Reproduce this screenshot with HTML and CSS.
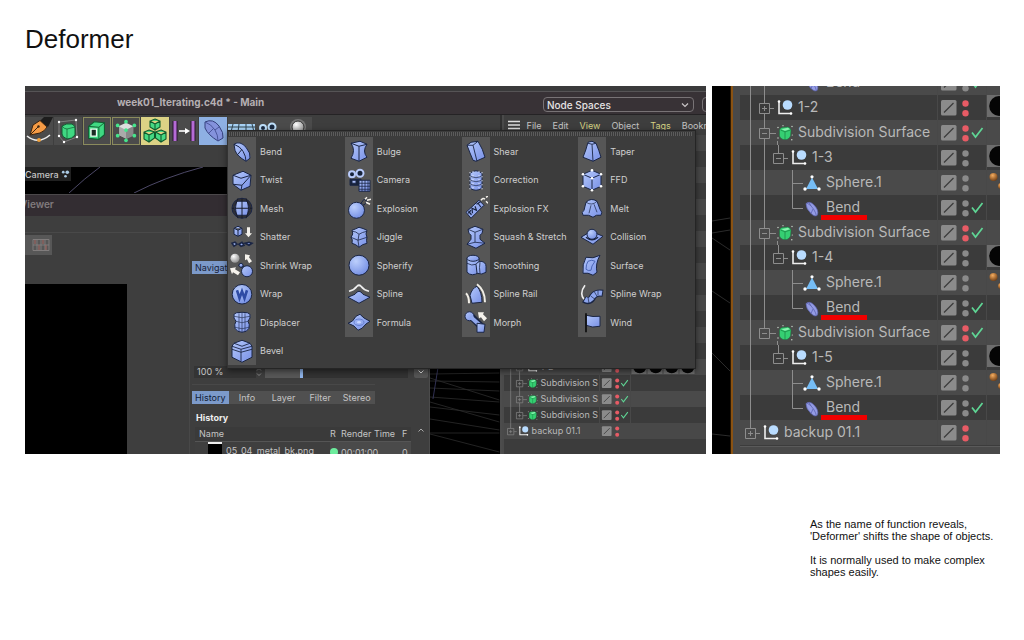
FILE: index.html
```html
<!DOCTYPE html>
<html lang="en">
<head>
<meta charset="utf-8">
<title>Deformer</title>
<link rel="stylesheet" href="styles.css">
</head>
<body>
<svg class="defs" aria-hidden="true">
  <defs>
    <linearGradient id="blue" x1="0" y1="0" x2="1" y2="1"><stop offset="0" stop-color="#b4c8fb"/><stop offset="1" stop-color="#7890e6"/></linearGradient>
    <radialGradient id="ball" cx=".35" cy=".3" r=".8"><stop offset="0" stop-color="#bccffc"/><stop offset="1" stop-color="#6f8ae2"/></radialGradient>
    <radialGradient id="grey" cx=".35" cy=".3" r=".8"><stop offset="0" stop-color="#fff"/><stop offset="1" stop-color="#858585"/></radialGradient>
    <radialGradient id="rust" cx=".4" cy=".3" r=".8"><stop offset="0" stop-color="#f5ad60"/><stop offset="1" stop-color="#63330d"/></radialGradient>
  </defs>
  <g fill="none" stroke="#8d8d8d">
    <path id="l0" d="M10.500 0V25"/>
    <path id="l1" d="M24.500 0V25"/>
  </g>
  <symbol id="nul" viewBox="0 0 16 16"><path d="M2 1.500V14H14.500" fill="none" stroke="#eee" stroke-width="1.600"/><circle cx="2" cy="2" r="1.300" fill="#fff"/><circle cx="14" cy="14" r="1.300" fill="#fff"/><circle cx="10.500" cy="5.500" r="4.800" fill="#b9dcff"/></symbol>
  <symbol id="sds" viewBox="0 0 16 16"><path d="M2.500 5Q3 3 5 2.500L11 2Q13.500 3 14 5L13.500 11Q12 14 10 14.500L6 14.500Q3 13 2.500 11Z" fill="#35cf72" stroke="#1c6b3c" stroke-width=".5"/><path d="M3.500 5L8 6.800L13.500 5M8 6.800L8 14" fill="none" stroke="#17803f" stroke-width=".7"/><path d="M4.500 4.300L11 2.800L12.800 4.300L8 5.800Z" fill="#8cf3b2"/><g fill="#cfdcd1"><circle cx="1" cy="2.500" r=".7"/><circle cx="6" cy=".7" r=".6"/><circle cx="15" cy="1.500" r=".7"/><circle cx="15.300" cy="10" r=".6"/><circle cx="1" cy="13" r=".7"/><circle cx="14.800" cy="14.800" r=".7"/></g></symbol>
  <symbol id="sph" viewBox="0 0 18 16"><path d="M9 2.500L15 14H3Z" fill="#76bdf5"/><g fill="#fff"><circle cx="9" cy="1.800" r="1.600"/><circle cx="2" cy="14" r="1.700"/><circle cx="16" cy="14" r="1.700"/></g></symbol>
  <symbol id="bnd" viewBox="0 0 16 16"><path d="M2 2.500Q6-.5 10 4Q15 9 13.500 14Q11 16.500 7 12.500Q1.500 7 2 2.500Z" fill="#949ce4" stroke="#5a60a8" stroke-width=".7"/><path d="M3 2Q7 4 9.500 8Q12 12 12.500 15M7 12.500L9 8M5 1.500L7 5" fill="none" stroke="#5c63b0" stroke-width=".8"/></symbol>

  <symbol id="r-null1" viewBox="0 0 55 25"><path d="M24.500 0V8M24.500 19V25M30 13.500H34" stroke="#8d8d8d"/><path d="M19.500 8.500H29.500V18.500H19.500ZM22 13.500H27M24.500 11V16" fill="none" stroke="#8d8d8d"/><use href="#nul" x="37" y="4.500" width="16" height="16"/></symbol>
  <symbol id="r-sds" viewBox="0 0 55 25"><path d="M24.500 0V8M30 13.500H36M37.500 21V25" stroke="#8d8d8d"/><path d="M19.500 8.500H29.500V18.500H19.500ZM22 13.500H27" fill="none" stroke="#8d8d8d"/><use href="#sds" x="37" y="5" width="16" height="16"/></symbol>
  <symbol id="r-sdsp" viewBox="0 0 55 25"><path d="M24.500 0V8M30 13.500H36" stroke="#8d8d8d"/><path d="M19.500 8.500H29.500V18.500H19.500ZM22 13.500H27M24.500 11V16" fill="none" stroke="#8d8d8d"/><use href="#sds" x="37" y="5" width="16" height="16"/></symbol>
  <symbol id="r-down" viewBox="0 0 55 25"><path d="M24.500 19V25" stroke="#8d8d8d"/></symbol>
  <symbol id="r-null2" viewBox="0 0 69 25"><path d="M38.500 0V8M44 13.500H48" stroke="#8d8d8d"/><path d="M33.500 8.500H43.500V18.500H33.500ZM36 13.500H41" fill="none" stroke="#8d8d8d"/><use href="#nul" x="51" y="4.500" width="16" height="16"/></symbol>
  <symbol id="r-sph" viewBox="0 0 83 25"><path d="M52.500 0V25M52.500 13.500H63" stroke="#8d8d8d"/><use href="#sph" x="63" y="5" width="18" height="16"/></symbol>
  <symbol id="r-bnd" viewBox="0 0 83 25"><path d="M52.500 0V13.500H63" fill="none" stroke="#8d8d8d"/><use href="#bnd" x="64" y="6" width="16" height="16"/></symbol>
  <symbol id="r-back" viewBox="0 0 41 25"><path d="M10.500 0V8M16 13.500H20" stroke="#8d8d8d"/><path d="M5.500 8.500H15.500V18.500H5.500ZM8 13.500H13M10.500 11V16" fill="none" stroke="#8d8d8d"/><use href="#nul" x="23" y="4.500" width="16" height="16"/></symbol>
  <symbol id="st" viewBox="0 0 48 25"><rect x="3" y="5" width="15.500" height="15.500" rx="1.500" fill="#8b8b8b"/><path d="M6 17.500L15.500 8" stroke="#3c3c3c" stroke-width="1.300"/><circle cx="27.500" cy="8.500" r="3.200" fill="currentColor"/><circle cx="27.500" cy="18.300" r="3.200" fill="currentColor"/></symbol>
  <symbol id="ok" viewBox="0 0 48 25"><path d="M34 12.500L37.500 17L44.500 8" fill="none" stroke="#5fd695" stroke-width="1.700"/></symbol>
  <symbol id="tile" viewBox="0 0 20 20"><rect width="20" height="20" fill="#6d6d6d"/><circle cx="11" cy="10" r="9" fill="#050505"/></symbol>
  <symbol id="beads" viewBox="0 0 16 25"><circle cx="6.500" cy="7" r="4" fill="url(#rust)"/><circle cx="14" cy="16" r="3" fill="url(#rust)"/></symbol>
</svg>

<header><h1>Deformer</h1></header>

<main>
  <section class="shots">
    <div class="shot app">
      <div class="strip"></div>
      <div class="titlebar">
        <span class="doc">week01_Iterating.c4d * - Main</span>
        <div class="spaces">
          <select aria-label="Node Spaces"><option>Node Spaces</option></select>
          <svg viewBox="0 0 8 6"><path d="M1 1.500L4 4.500L7 1.500" fill="none" stroke="#c8c4c6" stroke-width="1.200"/></svg>
        </div>
        <span class="nextbox"></span>
      </div>

      <div class="body">
        <div class="work">
          <div class="tools">
            <button aria-label="Spline pen"><svg viewBox="0 0 28 28"><path d="M15 4L19 0H28L23 10Z" fill="#1d1d1d"/><path d="M5 18L8 8L15 3.500L22 10Q20 14 15 16Z" fill="#f59b45" stroke="#3a2410"/><path d="M5 18L13 10" stroke="#3a2410"/><circle cx="13.500" cy="9.500" r="1.200" fill="#3a2410"/><path d="M2 19Q13 28 25 18" fill="none" stroke="#eee" stroke-width="1.600"/><circle cx="14" cy="23" r="2" fill="#f0a13d"/></svg></button>
            <button aria-label="Cube"><svg viewBox="0 0 28 28"><path d="M5 5L22 3L23 20L10 25L5 19Z" fill="none" stroke="#8b8b8b" stroke-width=".8"/><path d="M8 9Q12 6 18 7Q22 9 21 12V18Q18 22 13 22Q8 20 8 17Z" fill="#3fd982" stroke="#135c32"/><path d="M8 9Q10 12 13 12L21 10M13 12V22" stroke="#135c32" stroke-width=".7" fill="none"/><g fill="#fff"><circle cx="5" cy="5" r="1.200"/><circle cx="22" cy="3" r="1.200"/><circle cx="5" cy="19" r="1.200"/><circle cx="23" cy="20" r="1.200"/><circle cx="10" cy="25" r="1.200"/></g></svg></button>
            <button class="lined" aria-label="Extrude"><svg viewBox="0 0 28 28"><path d="M5 9L11 4L22 5V18L16 23L5 22Z" fill="#3fd982" stroke="#135c32" stroke-width="1.200"/><path d="M5 9L16 10L22 5M16 10V23" stroke="#135c32" fill="none"/><path d="M7.500 12H13.500V19.500H7.500Z" fill="#1a2c22" stroke="#e8fff0" stroke-width="1.500"/></svg></button>
            <button class="lined" aria-label="Array"><svg viewBox="0 0 28 28"><path d="M14 5L22 9V19L14 23L6 19V9Z" fill="#aaa" stroke="#444"/><path d="M14 5L22 9L14 13L6 9Z" fill="#ddd"/><path d="M14 13V23L22 19V9Z" fill="#888"/><g fill="#45e58b"><circle cx="14" cy="4" r="2"/><circle cx="5" cy="8" r="2"/><circle cx="23" cy="8" r="2"/><circle cx="14" cy="13" r="2"/><circle cx="5" cy="19" r="2"/><circle cx="23" cy="19" r="2"/><circle cx="14" cy="24" r="2"/></g></svg></button>
            <button class="yellow" aria-label="Cloner"><svg viewBox="0 0 28 28"><g fill="#45d983" stroke="#0f5a2d" stroke-width="1.100"><path d="M14 2L19 4V10L14 13L9 10V4ZM9 4L14 7L19 4M14 7V13"/><path d="M8 13L13.500 15V21L8 25L3 22V15ZM3 15L8 18L13.500 15M8 18V25"/><path d="M20 13L25 15V22L20 25L14.500 21V15ZM14.500 15L20 18L25 15M20 18V25"/></g></svg></button>
            <button aria-label="Measure"><svg viewBox="0 0 28 28"><path d="M5 4V24M23 4V24" stroke="#2b1533" stroke-width="5"/><path d="M5 4V24M23 4V24" stroke="#b56bd6" stroke-width="3"/><path d="M9 14H17" stroke="#fff" stroke-width="1.600"/><path d="M15 11L20 14L15 17Z" fill="#fff"/></svg></button>
            <button class="active" aria-label="Deformers"><svg viewBox="0 0 28 28"><path d="M6 5Q14 1 20 9Q25 16 24 21L19 24Q9 18 6 11Z" fill="#8492dc" stroke="#34407c"/><path d="M6 5Q12 7 16 13Q19 18 19 24M10 16L15 11M20 10L16 13" fill="none" stroke="#4a569b"/></svg></button>
            <button class="cut" aria-label="Floor"><svg viewBox="0 0 28 28"><path d="M0 7H27V15H0Z" fill="#a8d2f5"/><path d="M0 10H27M5 7L3 15M11 7L10 15M18 7L18 15M24 7L26 15" stroke="#304450"/></svg></button>
            <button class="cut" aria-label="Camera"><svg viewBox="0 0 28 28"><circle cx="7" cy="11" r="3" fill="#1b2a40" stroke="#bfe0fb" stroke-width="2"/><circle cx="16" cy="10" r="3.500" fill="#1b2a40" stroke="#bfe0fb" stroke-width="2"/></svg></button>
            <button class="cut" aria-label="Light"><svg viewBox="0 0 28 28"><circle cx="14" cy="10" r="8" fill="#777"/><circle cx="14" cy="10" r="6" fill="url(#grey)" stroke="#333"/></svg></button>
          </div>

          <div class="camera">
            <span>Camera <svg viewBox="0 0 10 8"><g fill="#a9c8e2"><circle cx="2.500" cy="2" r="1.500"/><circle cx="7" cy="2" r="2"/><circle cx="5" cy="6.500" r="1.500"/></g></svg></span>
            <svg class="arcs" viewBox="0 0 201 26"><path d="M44 26Q60 11 75 0M109 26Q140 10 178 0" fill="none" stroke="#5f5a80" stroke-width=".8"/></svg>
          </div>

          <div class="lower">
            <div class="viewer">
              <div class="viewer-title"><span>Viewer</span></div>
              <div class="viewer-menu"></div>
              <div class="viewer-body">
                <div class="preview">
                  <button aria-label="Compare"><svg viewBox="0 0 18 12"><path d="M1 .5H17V11.500H1ZM5 1V11M9 1V11M13 1V11M1 6H17" fill="none" stroke="#858080" stroke-width=".9"/><path d="M3 1V5M7 6V11M11 1V5M14 6V11" stroke="#9c6560" stroke-width="1.200"/></svg></button>
                  <div class="canvas"></div>
                </div>
                <div class="panel">
                  <button class="nav">Navigator</button>
                  <div class="thumb"></div>
                  <div class="zoomrow">
                    <output>100 %</output>
                    <svg class="spin" viewBox="0 0 6 10"><path d="M1 3.500L3 1.500L5 3.500M1 6.500L3 8.500L5 6.500" fill="none" stroke="#999" stroke-width=".8"/></svg>
                    <input type="range" min="0" max="100" value="25" aria-label="Zoom">
                    <button aria-label="Zoom presets"><svg viewBox="0 0 8 6"><path d="M1.500 1.500L4 4L6.500 1.500" fill="none" stroke="#ddd"/></svg></button>
                  </div>
                  <div class="tabs">
                    <button class="on">History</button><button>Info</button><button>Layer</button><button>Filter</button><button>Stereo</button>
                  </div>
                  <h2>History</h2>
                  <div class="hist">
                    <table>
                      <thead><tr><th class="n">Name</th><th class="r">R</th><th class="t">Render Time</th><th class="f">F</th></tr></thead>
                      <tbody><tr><td><span class="pic"></span>05_04_metal_bk.png</td><td><i class="dot"></i></td><td>00:01:00</td><td>0</td></tr></tbody>
                    </table>
                    <svg viewBox="0 0 8 6"><path d="M1.500 4.500L4 2L6.500 4.500" fill="none" stroke="#aaa"/></svg>
                  </div>
                </div>
              </div>
            </div>
            <div class="viewport"><svg viewBox="0 0 70 260" preserveAspectRatio="none"><g fill="none" stroke="#2c2c2c" stroke-width=".8"><path d="M0 180L70 179M0 187L70 188M0 194L70 197M0 203L70 208M0 213L70 221M0 225L70 236M0 239L70 239M0 184L70 206M0 208L70 228M0 240L70 258"/><path d="M3 205L8 174" stroke="#3c3c68"/></g></svg></div>
          </div>
        </div>

        <div class="objects">
          <nav>
            <svg viewBox="0 0 12 10"><path d="M0 1.500H12M0 5H12M0 8.500H12" stroke="#ddd" stroke-width="1.600"/></svg>
            <button>File</button><button>Edit</button><button class="hot">View</button><button>Object</button><button class="hot">Tags</button><button>Bookmarks</button>
          </nav>
          <ul class="tree small">
            <li><svg class="g g1" viewBox="0 0 55 25"><use href="#l0" class="ln"/><use href="#r-null1"/></svg><span class="name">1-2</span><svg class="state red"><use href="#st"/></svg><span class="mats"><svg><use href="#tile"/></svg><svg><use href="#tile"/></svg><svg><use href="#tile"/></svg><svg><use href="#tile"/></svg></span></li>
            <li><svg class="g g1" viewBox="0 0 55 25"><use href="#l0" class="ln"/><use href="#r-down"/><use href="#r-sdsp"/></svg><span class="name">Subdivision S</span><svg class="state red"><use href="#st"/><use href="#ok"/></svg><span class="mats"></span></li>
            <li><svg class="g g1" viewBox="0 0 55 25"><use href="#l0" class="ln"/><use href="#r-down"/><use href="#r-sdsp"/></svg><span class="name">Subdivision S</span><svg class="state red"><use href="#st"/><use href="#ok"/></svg><span class="mats"></span></li>
            <li><svg class="g g1" viewBox="0 0 55 25"><use href="#l0" class="ln"/><use href="#r-sdsp"/></svg><span class="name">Subdivision S</span><svg class="state red"><use href="#st"/><use href="#ok"/></svg><span class="mats"></span></li>
            <li><svg class="g g0"><use href="#r-back"/></svg><span class="name">backup 01.1</span><svg class="state red"><use href="#st"/></svg><span class="mats"></span></li>
          </ul>
        </div>
      </div>

      <div class="menu" role="menu">
        <ul>
          <li><button><svg viewBox="0 0 24 24"><path d="M4 5Q10 1 16 8Q21 14 20 19L16 22Q7 17 5 11Z"/><path d="M4 5Q10 7 13 12Q16 17 16 22M8 15L12 10" fill="none"/></svg>Bend</button></li>
          <li><button><svg viewBox="0 0 24 24"><path d="M3 7L13 3L21 7L20 18L11 22L3 16Z"/><path d="M3 7L11 10L21 7L12 17L3 16M12 17L11 22" fill="none"/></svg>Twist</button></li>
          <li><button><svg viewBox="0 0 24 24"><circle cx="12" cy="12" r="10" fill="#303034"/><path d="M7 5H17L20 12L17 19H7L4 12Z"/><path d="M8 2Q3 12 8 22M16 2Q21 12 16 22M12 2V22M2 12H22" fill="none" stroke="#191c2b"/></svg>Mesh</button></li>
          <li><button><svg viewBox="0 0 24 24"><path d="M4 3L8 1L12 3V9L8 11L4 9ZM4 3L8 5L12 3M8 5V11"/><path d="M17 2H20V8H22L18.500 12L15 8H17Z" fill="#f5f2ec" stroke="none"/><path d="M2 18L5 17L7 19L4 21ZM9 19L12 17L14 20L11 21ZM15 18L19 17L22 18L19 20Z" stroke-width="1.600"/></svg>Shatter</button></li>
          <li><button><svg viewBox="0 0 24 24"><circle cx="5" cy="5" r="4.500" fill="url(#grey)" stroke="none"/><path d="M9 11L16 16" stroke-width="3"/><circle cx="11" cy="12" r="2"/><circle cx="17" cy="18" r="5.500"/><path d="M15 1L20 2L19 4L22 8L19 10L17 6L15 7ZM0 15L6 14L5 16L10 19L8 22L3 19L2 21Z" fill="#f5f2ec" stroke="none"/></svg>Shrink Wrap</button></li>
          <li><button><svg viewBox="0 0 24 24"><circle cx="12" cy="12" r="9.800" fill="url(#ball)"/><path d="M7 8L9.500 16L12 9L14.500 16L17 8" fill="none" stroke="#2e4ba5" stroke-width="2.600"/></svg>Wrap</button></li>
          <li><button><svg viewBox="0 0 24 24"><path d="M4 4Q5 2 12 2Q19 2 20 4Q21 8 18 11Q20 14 19 18Q17 22 12 22Q7 22 5 18Q4 14 6 11Q3 8 4 4Z"/><path d="M4 6Q12 9 20 6M6 11Q12 14 18 11M5 17Q12 20 19 17M9 3V21M12 2V22M15 3V21" fill="none" stroke-width=".6"/></svg>Displacer</button></li>
          <li><button><svg viewBox="0 0 24 24"><path d="M2 7L4 4L12 1L20 4L22 7V18L12 23L2 18Z"/><path d="M2 7L11 10L22 7M11 10V22M4 4L12 7L20 4M2 10L11 13L22 10" fill="none" stroke-width=".9"/></svg>Bevel</button></li>
        </ul>
        <ul>
          <li><button><svg viewBox="0 0 24 24"><path d="M4 4L13 2L20 5Q15 12 20 18L12 22L4 19Q9 11 4 4Z"/><path d="M4 4L12 7L20 5M12 7V22" fill="none"/></svg>Bulge</button></li>
          <li><button><svg viewBox="0 0 24 24"><circle cx="5" cy="6" r="3" fill="#17233a" stroke="#b9cbfb" stroke-width="2"/><circle cx="13" cy="5" r="3.500" fill="#17233a" stroke="#b9cbfb" stroke-width="2"/><path d="M3 11H14V17H3Z" fill="#17233a"/><path d="M5 12H9V15H5ZM12 12H23V23H12Z"/><path d="M15 12V23M18 12V23M21 12V23M12 15H23M12 18H23M12 21H23" stroke-width=".8"/></svg>Camera</button></li>
          <li><button><svg viewBox="0 0 24 24"><path d="M14 7L17 3L20 5L17 9Z" fill="#555"/><circle cx="9.500" cy="14" r="8" fill="url(#ball)"/><path d="M18 3L20 1M20 4L24 3M19 6L23 8" stroke="#f5f2ec" stroke-width="1.500"/></svg>Explosion</button></li>
          <li><button><svg viewBox="0 0 24 24"><path d="M5 5Q8 4 12 2Q16 3 20 5Q18 9 20 12Q19 15 20 18Q15 19 12 22Q9 19 5 18Q6 14 4 12Q7 9 5 5Z"/><path d="M5 6Q9 6 12 9Q15 7 20 6M12 9Q10 15 12 22M4 12L11 15L20 12" fill="none" stroke-width=".8"/></svg>Jiggle</button></li>
          <li><button><svg viewBox="0 0 24 24"><circle cx="12" cy="12" r="10" fill="url(#ball)"/></svg>Spherify</button></li>
          <li><button><svg viewBox="0 0 24 24"><path d="M2 9Q7 8 10 4Q12 2 14 4Q17 8 22 9" fill="none" stroke="#eee" stroke-width="1.700"/><path d="M1 15L8 12Q12 6 16 12L23 15L12 21Z"/></svg>Spline</button></li>
          <li><button><svg viewBox="0 0 24 24"><path d="M1 13Q6 12 9 6L13 4Q16 8 23 11Q19 13 15 18L11 20Q8 15 1 13Z"/><ellipse cx="12" cy="12" rx="5" ry="3.200" fill="none" stroke="#657fd0"/><ellipse cx="12" cy="12" rx="2" ry="1.200" fill="#c6d5ff" stroke="none"/></svg>Formula</button></li>
        </ul>
        <ul>
          <li><button><svg viewBox="0 0 24 24"><path d="M3 6L7 3L14 2Q19 10 21 18L12 22L9 21Q6 14 3 6Z"/><path d="M3 6L9 6L13 22M9 6L14 2" fill="none" stroke-width=".9"/></svg>Shear</button></li>
          <li><button><svg viewBox="0 0 24 24"><path d="M6 5Q12 0 18 5V20Q12 24 6 20Z"/><path d="M6 8Q12 11 18 8M6 12Q12 15 18 12M6 16Q12 19 18 16" fill="none" stroke-width=".7"/><path d="M6 4V21M9 3V22M15 3V22M18 4V21" fill="none" stroke="#e8edff" stroke-width="1.200" stroke-dasharray="1 3"/></svg>Correction</button></li>
          <li><button><svg viewBox="0 0 24 24"><path d="M2 16L15 4L20 9L7 22Z"/><path d="M4.500 15L7.500 18.500M4 17L7 14M8.500 17L8 12L12.500 14L11 10M12.500 8L16.500 5.500M14 7L17 11" fill="none" stroke-width="1.200"/><path d="M17 4Q19 1 21 3M22 1L24 0M22 5L24 7" fill="none" stroke="#f5f2ec" stroke-width="1.500"/></svg>Explosion FX</button></li>
          <li><button><svg viewBox="0 0 24 24"><path d="M4 4L11 1L19 4L18 8L16 10V14L21 18L12 23L3 19L7 14V10L5 8Z"/><path d="M4 4L11 7L19 4M11 7V17L3 19M11 17L21 18" fill="none" stroke-width=".8"/></svg>Squash &amp; Stretch</button></li>
          <li><button><svg viewBox="0 0 24 24"><path d="M3 5V19Q8 24 15 19V5"/><ellipse cx="9" cy="5" rx="6" ry="3"/><path d="M12 11Q14 8 17 8Q22 9 22 13V19Q18 22 13 20Z"/><path d="M16 9Q15 14 16 20M3 10Q8 13 12 11" fill="none" stroke-width=".8"/></svg>Smoothing</button></li>
          <li><button><svg viewBox="0 0 24 24"><path d="M6 13Q8 6 13 4Q18 10 18 20L8 21Z"/><path d="M2 11Q5 14 5 21M13 2Q21 8 21 20" fill="none" stroke="#f1eee6" stroke-width="2"/></svg>Spline Rail</button></li>
          <li><button><svg viewBox="0 0 24 24"><path d="M7 6L17 16" stroke="#1b2645" stroke-width="7"/><circle cx="5.500" cy="6" r="4.500"/><path d="M7 7L17 16" stroke="#91a8ee" stroke-width="4"/><path d="M13 13L21 14L20 22H13Z"/><path d="M14 2L20 2L19 4L23 8L20 11L17 7L15 8Z" fill="#f5f2ec" stroke="none"/></svg>Morph</button></li>
        </ul>
        <ul>
          <li><button><svg viewBox="0 0 24 24"><path d="M8 3L12 2L16 4Q19 11 21 18L13 22L3 18Q6 11 8 3Z"/><path d="M8 4L12 5L16 4M12 5L13 22" fill="none" stroke-width=".9"/></svg>Taper</button></li>
          <li><button><svg viewBox="0 0 24 24"><path d="M3 6L12 2L21 6V18L12 22L3 18Z"/><path d="M3 6L12 10L21 6M12 10V22" fill="none"/><g fill="#fff" stroke="none"><circle cx="3" cy="6" r="1.300"/><circle cx="12" cy="2" r="1.300"/><circle cx="21" cy="6" r="1.300"/><circle cx="12" cy="10" r="1.300"/><circle cx="3" cy="18" r="1.300"/><circle cx="21" cy="18" r="1.300"/><circle cx="12" cy="22" r="1.300"/></g></svg>FFD</button></li>
          <li><button><svg viewBox="0 0 24 24"><path d="M6 6Q11 1 17 5L20 13Q23 16 21 19Q16 18 13 21Q9 18 3 19Q1 16 4 14Z"/><path d="M6 6Q12 10 17 5M11 9L9 17M14 8L17 16" fill="none" stroke-width=".7"/></svg>Melt</button></li>
          <li><button><svg viewBox="0 0 24 24"><path d="M1 12L11 6L23 11L13 19Z"/><path d="M6 12Q12 17 18 12" fill="none" stroke-width="1.500"/><circle cx="12" cy="9" r="5" fill="url(#ball)"/></svg>Collision</button></li>
          <li><button><svg viewBox="0 0 24 24"><path d="M6 4Q13 6 20 2Q15 11 17 19L13 22Q8 19 3 20Q2 11 6 4Z"/><path d="M8 8Q12 6 15 8Q11 13 11 17Q8 18 6 16Q6 11 8 8Z" fill="none" stroke="#4b66b7"/></svg>Surface</button></li>
          <li><button><svg viewBox="0 0 24 24"><path d="M5 3Q-1 11 4 17" fill="none" stroke="#eee" stroke-width="1.600"/><path d="M4 17Q10 21 13 14Q16 10 23 11" fill="none" stroke="#1b2645" stroke-width="7"/><path d="M5 17Q10 20 13 14Q16 10 22 11" fill="none" stroke="#8ea6ee" stroke-width="5"/><path d="M8 15L9 21M11 14L15 17M14 9L17 14M18 8V13" stroke-width=".7"/></svg>Spline Wrap</button></li>
          <li><button><svg viewBox="0 0 24 24"><path d="M6 5Q13 7 20 6V16Q12 18 6 15Z"/><path d="M6 3V22" stroke="#111" stroke-width="1.800"/></svg>Wind</button></li>
        </ul>
      </div>
    </div>

    <div class="shot detail">
      <div class="void"><svg viewBox="0 0 19 368" preserveAspectRatio="none"><path d="M0 135L19 132M0 147L19 144M0 152L19 164M0 205L19 217M0 267L19 285M0 348L19 350" stroke="#2c2c2c" fill="none"/></svg></div>
      <ul class="tree">
        <li class="first"><svg class="g g3" viewBox="0 0 83 25"><use href="#l0" class="ln"/><use href="#l1" class="ln"/><use href="#r-bnd"/></svg><span class="name">Bend</span><svg class="state"><use href="#st"/><use href="#ok"/></svg><span class="mats"></span></li>
        <li><svg class="g g1" viewBox="0 0 55 25"><use href="#l0" class="ln"/><use href="#r-null1"/></svg><span class="name">1-2</span><svg class="state red"><use href="#st"/></svg><span class="mats"><svg><use href="#tile"/></svg></span></li>
        <li><svg class="g g1" viewBox="0 0 55 25"><use href="#l0" class="ln"/><use href="#r-down"/><use href="#r-sds"/></svg><span class="name">Subdivision Surface</span><svg class="state red"><use href="#st"/><use href="#ok"/></svg><span class="mats"></span></li>
        <li><svg class="g g2" viewBox="0 0 69 25"><use href="#l0" class="ln"/><use href="#l1" class="ln"/><use href="#r-null2"/></svg><span class="name">1-3</span><svg class="state"><use href="#st"/></svg><span class="mats"><svg><use href="#tile"/></svg></span></li>
        <li><svg class="g g3" viewBox="0 0 83 25"><use href="#l0" class="ln"/><use href="#l1" class="ln"/><use href="#r-sph"/></svg><span class="name">Sphere.1</span><svg class="state"><use href="#st"/></svg><span class="mats"><svg class="b"><use href="#beads"/></svg></span></li>
        <li><svg class="g g3" viewBox="0 0 83 25"><use href="#l0" class="ln"/><use href="#l1" class="ln"/><use href="#r-bnd"/></svg><span class="name"><mark>Bend</mark></span><svg class="state"><use href="#st"/><use href="#ok"/></svg><span class="mats"></span></li>
        <li><svg class="g g1" viewBox="0 0 55 25"><use href="#l0" class="ln"/><use href="#r-down"/><use href="#r-sds"/></svg><span class="name">Subdivision Surface</span><svg class="state red"><use href="#st"/><use href="#ok"/></svg><span class="mats"></span></li>
        <li><svg class="g g2" viewBox="0 0 69 25"><use href="#l0" class="ln"/><use href="#l1" class="ln"/><use href="#r-null2"/></svg><span class="name">1-4</span><svg class="state"><use href="#st"/></svg><span class="mats"><svg><use href="#tile"/></svg></span></li>
        <li><svg class="g g3" viewBox="0 0 83 25"><use href="#l0" class="ln"/><use href="#l1" class="ln"/><use href="#r-sph"/></svg><span class="name">Sphere.1</span><svg class="state"><use href="#st"/></svg><span class="mats"><svg class="b"><use href="#beads"/></svg></span></li>
        <li><svg class="g g3" viewBox="0 0 83 25"><use href="#l0" class="ln"/><use href="#l1" class="ln"/><use href="#r-bnd"/></svg><span class="name"><mark>Bend</mark></span><svg class="state"><use href="#st"/><use href="#ok"/></svg><span class="mats"></span></li>
        <li><svg class="g g1" viewBox="0 0 55 25"><use href="#l0" class="ln"/><use href="#r-sds"/></svg><span class="name">Subdivision Surface</span><svg class="state red"><use href="#st"/><use href="#ok"/></svg><span class="mats"></span></li>
        <li><svg class="g g2" viewBox="0 0 69 25"><use href="#l0" class="ln"/><use href="#r-null2"/></svg><span class="name">1-5</span><svg class="state"><use href="#st"/></svg><span class="mats"><svg><use href="#tile"/></svg></span></li>
        <li><svg class="g g3" viewBox="0 0 83 25"><use href="#l0" class="ln"/><use href="#r-sph"/></svg><span class="name">Sphere.1</span><svg class="state"><use href="#st"/></svg><span class="mats"><svg class="b"><use href="#beads"/></svg></span></li>
        <li><svg class="g g3" viewBox="0 0 83 25"><use href="#l0" class="ln"/><use href="#r-bnd"/></svg><span class="name"><mark>Bend</mark></span><svg class="state"><use href="#st"/><use href="#ok"/></svg><span class="mats"></span></li>
        <li><svg class="g g0"><use href="#r-back"/></svg><span class="name">backup 01.1</span><svg class="state red"><use href="#st"/></svg><span class="mats"></span></li>
      </ul>
    </div>
  </section>

  <section class="notes">
    <p>As the name of function reveals,<br>'Deformer' shifts the shape of objects.</p>
    <p>It is normally used to make complex<br>shapes easily.</p>
  </section>
</main>
</body>
</html>
```
FILE: styles.css
```css
* { box-sizing: border-box; }
body {
  margin: 0;
  padding: 24px 24px 24px 25px;
  background: #fff;
  color: #111;
  font-family: "Liberation Sans", Arial, sans-serif;
}
svg { display: block; flex: none; }
ul { margin: 0; padding: 0; list-style: none; }
button, select {
  margin: 0;
  padding: 0;
  border: 0;
  background: none;
  color: inherit;
  font: inherit;
}
.defs { position: absolute; width: 0; height: 0; }
h1 { margin: 0; font-size: 26px; font-weight: 400; line-height: 30px; }

.shots {
  display: grid;
  grid-template-columns: minmax(0, 681fr) minmax(0, 288fr);
  gap: 6px;
  margin-top: 32px;
}
.shot {
  overflow: hidden;
  background: #3e3e3e;
  color: #c4c4c4;
  font-family: Inter, sans-serif;
}

/* application window */
.app { position: relative; display: flex; flex-direction: column; contain: size; font-size: 9px; }
.strip { flex: none; height: 6px; background: #3a3a3b; border-bottom: 1px solid #565456; }
.titlebar {
  flex: none;
  display: flex;
  align-items: center;
  height: 23px;
  background: #383236;
  border-bottom: 1px solid #252325;
}
.doc {
  flex: 1;
  padding-left: 92px;
  padding-bottom: 2px;
  color: #b5afb2;
  font-size: 10px;
  font-weight: 700;
  white-space: nowrap;
}
.spaces {
  display: flex;
  align-items: center;
  width: 151px;
  height: 15px;
  margin-top: 3px;
  padding-right: 4px;
  border: 1px solid #787376;
  border-radius: 4px;
}
.spaces select { flex: 1; appearance: none; padding-left: 3px; color: #e6e3e4; font-size: 10px; font-weight: 500; }
.spaces svg { width: 8px; height: 6px; }
.nextbox { width: 16px; height: 15px; margin: 3px -12px 0 8px; border: 1px solid #787376; border-radius: 4px; }

.body { flex: 1; display: flex; min-height: 0; }
.work { flex: 478; display: flex; flex-direction: column; min-width: 0; }
.tools { flex: none; display: flex; gap: 1px; height: 52px; padding-top: 2px; border-right: 2px solid #303030; }
.tools button { width: 28px; height: 28px; background: #4b4b4b; }
.tools svg { width: 100%; height: 100%; }
.tools .lined { border: 1px solid #8b8b5d; }
.tools .yellow { background: #dcd285; }
.tools .active { background: #8eb0e3; }
.tools .cut + .cut { margin-left: -1px; }

.camera { flex: none; display: flex; height: 27px; background: #000; }
.camera > span {
  display: flex;
  align-items: center;
  gap: 2px;
  width: 46px;
  height: 14px;
  background: #202020;
  color: #c6c6c6;
  font-weight: 500;
}
.camera span svg { width: 9px; height: 8px; }
.arcs { width: 201px; height: 26px; margin-left: -46px; }

.lower { flex: 1; display: flex; min-height: 0; }
.viewer { flex: 408; display: flex; flex-direction: column; min-width: 0; border-right: 1px solid #4b4b4b; }
.viewport { flex: 70; background: #000; border-right: 2px solid #4c4c4c; }
.viewport svg { width: 100%; height: 260px; }
.viewer-title {
  flex: none;
  height: 22px;
  background: #332d32;
  border-top: 1px solid #4b484a;
  color: #807a7d;
  font-size: 10px;
  font-weight: 600;
  line-height: 18px;
}
.viewer-title span { margin-left: -5px; }
.viewer-menu { flex: none; height: 17px; border-bottom: 1px solid #494949; }
.viewer-body { flex: 1; display: flex; min-height: 0; }
.preview { flex: 166; }
.preview button { display: block; width: 27px; height: 20px; margin: 2px 0 29px; padding: 4px 2px 4px 7px; background: #575757; }
.preview svg { width: 18px; height: 12px; }
.preview .canvas { width: 102px; height: 100%; background: #000; }
.panel { flex: 240; min-width: 0; padding: 28px 0 0 2px; border-left: 1px solid #484848; }
.nav { display: block; width: 50px; height: 13px; padding-left: 3px; background: #7c9aca; color: #182238; line-height: 12px; text-align: left; }
.thumb { height: 92px; }
.zoomrow { display: flex; align-items: center; height: 12px; padding-left: 2px; }
.zoomrow output { width: 62px; padding-left: 3px; background: #343434; line-height: 12px; }
.spin { width: 6px; height: 10px; margin-right: 3px; }
.zoomrow input {
  appearance: none;
  width: 143px;
  height: 12px;
  margin: 0 6px 0 0;
  background: linear-gradient(90deg, #575757 25%, #323232 25%);
}
.zoomrow input::-webkit-slider-thumb { appearance: none; width: 3px; height: 12px; background: #8fb4ea; }
.zoomrow button { width: 14px; height: 12px; padding: 3px; background: #555; border-radius: 2px; }
.zoomrow button svg { width: 8px; height: 6px; }
.tabs { display: flex; width: 183px; height: 20px; margin: 6px 0 0; padding-top: 6px; border-top: 1px solid #484848; }
.tabs button { flex: 1; height: 13px; background: #505050; line-height: 13px; text-align: center; }
.tabs .on { background: #7c9aca; color: #111c36; }
.panel h2 { margin: 8px 0 3px 4px; color: #eee; font-size: 9px; font-weight: 700; line-height: 12px; }
.hist { display: flex; gap: 6px; margin-left: 3px; }
.hist > svg { width: 8px; height: 6px; }
.hist table { width: 216px; border-collapse: collapse; table-layout: fixed; }
.hist th, .hist td { padding: 0; font-weight: 400; text-align: left; white-space: nowrap; }
.hist th { height: 14px; background: #3a3a3a; border-bottom: 1px solid #555; }
.hist th.n { padding-left: 4px; }
.hist .r { width: 11px; }
.hist .t { width: 61px; }
.hist .f { width: 9px; }
.hist td { height: 22px; background: #4a4a4a; }
.hist td:first-child { background: #3f3f3f; }
.pic { display: inline-block; width: 14px; height: 20px; margin: 0 4px 0 13px; background: #000; border-top: 2px solid #eee; vertical-align: middle; }
.dot { display: block; width: 8px; height: 8px; border-radius: 50%; background: #6dec9d; }

/* object manager */
.objects { flex: 203; min-width: 0; overflow: hidden; border-left: 2px solid #4a4a4a; }
.objects nav { display: flex; align-items: center; gap: 11px; height: 20px; padding: 0 0 0 4px; }
.objects nav svg { width: 12px; height: 10px; margin-right: -4px; }
.hot { color: #d5d283; }
.tree li { display: flex; height: 25px; background: #4a4a4a; color: #b9b9b9; font-size: 14px; line-height: 24px; }
.tree li:nth-child(even) { background: #3b3b3b; }
.tree .g { height: 25px; }
.ln { stroke: #8d8d8d; }
.g0 { width: 41px; }
.g1 { width: 55px; }
.g2 { width: 69px; }
.g3 { width: 83px; }
.name { flex: 1; min-width: 0; padding-left: 3px; white-space: nowrap; }
.state { width: 49px; height: 25px; border-left: 1px solid #484848; color: #8a8a8a; }
.red { color: #e75b65; }
.mats { flex: none; width: 14px; height: 25px; overflow: hidden; border-left: 1px solid #484848; }
.mats svg { width: 22px; height: 22px; }
.mats .b { width: 16px; height: 25px; }

.small { height: 330px; padding-top: 224px; background: repeating-linear-gradient(#484848 0 16px, #3c3c3c 16px 32px); }
.tree.small li { height: 16px; font-size: 9px; line-height: 15px; }
.small li:last-child { background: #484848; }
.tree.small .g { height: 16px; }
.small .g0 { width: 26px; }
.small .g1 { width: 35px; }
.small .name { padding-left: 2px; }
.small .state { width: 31px; height: 16px; }
.small .mats { display: flex; width: 76px; height: 16px; }
.small .mats svg { width: 16px; height: 15px; }

/* deformer palette, open over the window */
.menu {
  position: absolute;
  left: 202px;
  top: 44px;
  display: grid;
  grid-template-columns: repeat(4, 1fr);
  width: 469px;
  padding: 6px 0 3px;
  border: 1px solid #252525;
  border-left-color: #333;
  background: #3c3c3c;
  box-shadow: 0 2px 6px rgba(0, 0, 0, .5);
}
.menu::before {
  content: "";
  position: absolute;
  inset: 1px 3px auto 1px;
  height: 4px;
  background: repeating-linear-gradient(90deg, #5b5b5b 0 1px, #393939 1px 2px);
}
.menu ul { display: grid; grid-template-rows: repeat(8, 1fr); height: 228px; }
.menu li, .menu button { display: flex; }
.menu button { gap: 4px; width: 100%; color: #cfcfcf; white-space: nowrap; align-items: center; }
.menu svg { width: 28px; height: 100%; padding: 2px; background: #565656; fill: url(#blue); stroke: #1b2645; }

/* tree detail */
.detail { display: grid; grid-template-columns: 19px minmax(0, 1fr); }
.void { background: #000; border-right: 1px solid #2b1a05; }
.void svg { width: 100%; height: 368px; }
.detail .tree { padding-bottom: 9px; border-left: 2px solid #8a5212; padding-left: 7px; background: #494949; overflow: hidden; }
.detail li:last-child { box-shadow: 0 1px 0 #3c3c3c, 0 2px 0 #5a5a5a; }
.detail .first { margin-top: -16px; }
mark { position: relative; background: none; color: inherit; }
mark::after {
  content: "";
  position: absolute;
  left: -5px;
  right: -7px;
  top: 17px;
  height: 5px;
  background: #f00000;
}

.notes {
  width: 190px;
  margin: 64px 0 0 auto;
  font-size: 11px;
  line-height: 12px;
  white-space: nowrap;
}
.notes p { margin: 0 0 12px; }
```
